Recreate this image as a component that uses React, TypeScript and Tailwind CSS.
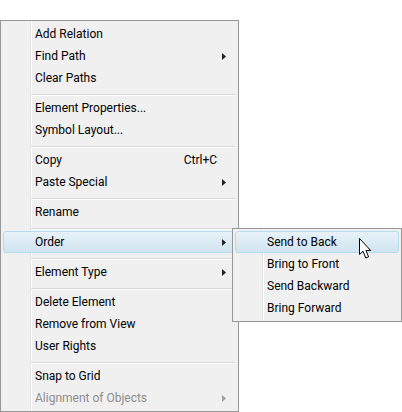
const font = { fontFamily: 'Roboto, "Noto Sans", sans-serif' };

type Item = { label: string; shortcut?: string; arrow?: boolean; active?: boolean; disabled?: boolean };

const groups: Item[][] = [
  [{ label: "Add Relation" }, { label: "Find Path", arrow: true }, { label: "Clear Paths" }],
  [{ label: "Element Properties..." }, { label: "Symbol Layout..." }],
  [{ label: "Copy", shortcut: "Ctrl+C" }, { label: "Paste Special", arrow: true }],
  [{ label: "Rename" }],
  [{ label: "Order", arrow: true, active: true }],
  [{ label: "Element Type", arrow: true }],
  [{ label: "Delete Element" }, { label: "Remove from View" }, { label: "User Rights" }],
  [{ label: "Snap to Grid" }, { label: "Alignment of Objects", arrow: true, disabled: true }],
];

const subItems = ["Send to Back", "Bring to Front", "Send Backward", "Bring Forward"];

const gutter =
  "bg-[linear-gradient(to_right,transparent_29px,#e2e3e3_29px,#e2e3e3_30px,#ffffff_30px,#ffffff_31px,transparent_31px)]";

function Arrow({ disabled }: { disabled?: boolean }) {
  return (
    <svg width="4" height="7" viewBox="0 0 4 7">
      <path d="M0 0L4 3.5L0 7Z" fill={disabled ? "#a0a0a0" : "#222222"} />
    </svg>
  );
}

function Row({ item }: { item: Item }) {
  return (
    <div
      className={`flex h-[22px] items-center pl-[31px] pr-[9px] text-[12px] ${
        item.disabled ? "text-[#8d8d8d]" : "text-black"
      } ${
        item.active
          ? "rounded-[3px] border border-[#b5dcee] bg-gradient-to-b from-[#e8f2f8] to-[#d0e4f0]"
          : "border border-transparent"
      }`}
    >
      <span className="flex-1">{item.label}</span>
      {item.shortcut && <span className="mr-[9px]">{item.shortcut}</span>}
      {item.arrow && <Arrow disabled={item.disabled} />}
    </div>
  );
}

function Separator() {
  return <div className="mb-[1px] ml-[28px] mr-[1px] mt-[5px] h-[2px] border-b border-t border-b-white border-t-[#d7d7d7]" />;
}

export default function App() {
  return (
    <div className="relative h-[412px] w-[402px] overflow-hidden bg-white pt-[20px]" style={font}>
      <div className={`h-[392px] w-[239px] border border-[#979797] bg-[#f0f0f0] px-[2px] pt-[2px] ${gutter}`}>
        {groups.map((group, i) => (
          <div key={i}>
            {i > 0 && <Separator />}
            {group.map((item) => (
              <Row key={item.label} item={item} />
            ))}
          </div>
        ))}
      </div>

      <div className={`absolute left-[232px] top-[228px] h-[94px] w-[170px] border border-[#979797] bg-[#f0f0f0] px-[2px] pt-[2px] ${gutter}`}>
        {subItems.map((label, i) => (
          <Row key={label} item={{ label, active: i === 0 }} />
        ))}
      </div>

      <svg width="13" height="21" viewBox="0 0 13 21" className="absolute left-[359px] top-[238px]">
        <path
          d="M0.5 0.5V16.5L4 13.2L6.8 20L9.6 18.8L6.9 12.5H11.7Z"
          fill="#ffffff"
          stroke="#000000"
          strokeWidth="1"
        />
      </svg>
    </div>
  );
}
